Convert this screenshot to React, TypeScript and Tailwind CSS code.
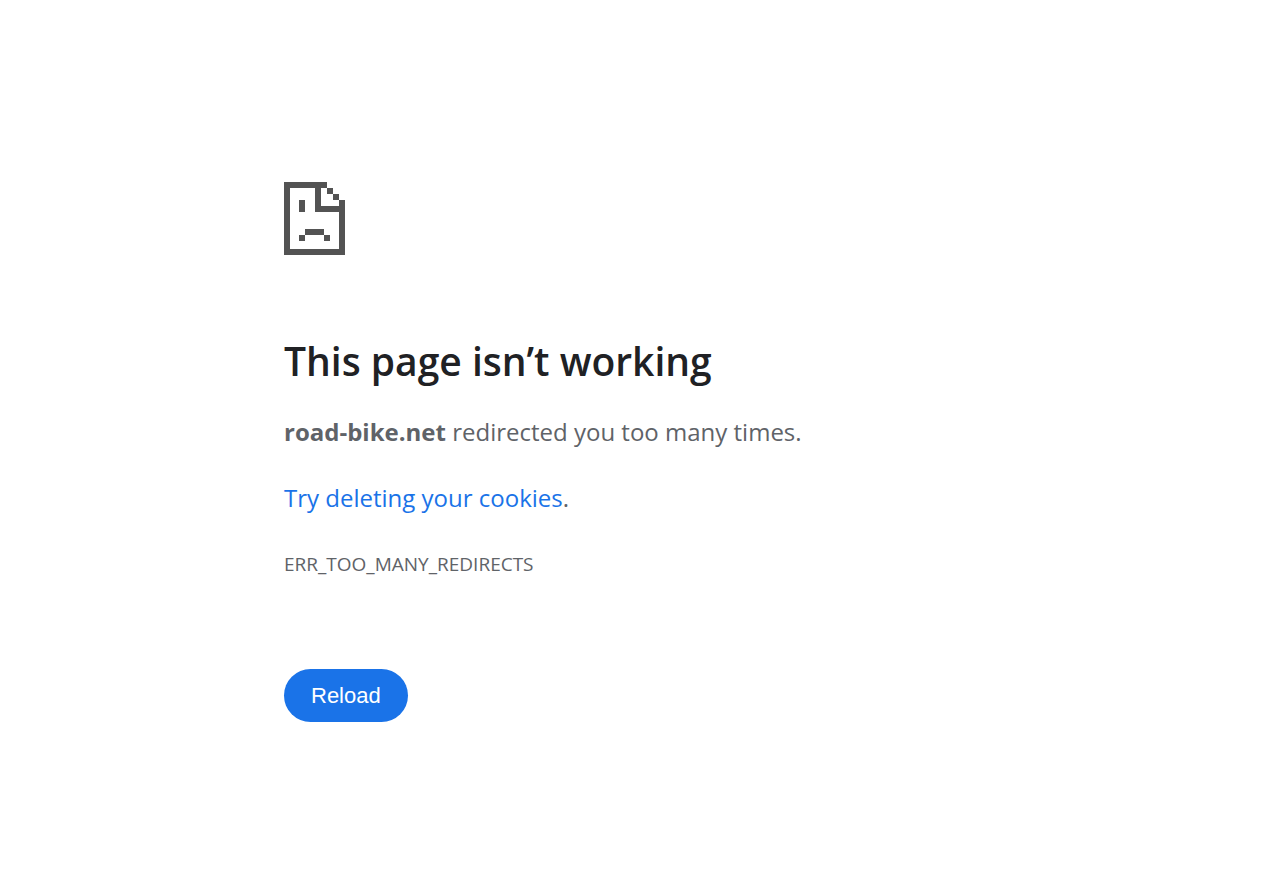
function SadPageIcon() {
  return (
    <svg
      className="h-[73px] w-[61px] text-[#535353]"
      viewBox="0 0 61 73"
      fill="currentColor"
      shapeRendering="crispEdges"
      aria-hidden="true"
    >
      <path
        d="M0 0h43v6h6v6h6v6h6v55H0zM6 6v61h49V30H31V6zM37 6v18h18v-6h-6v-6h-6V6z"
        fillRule="evenodd"
      />
      <path d="M15 18h6v12h-6zM21 47h19v6H21zM15 53h6v6h-6zM40 53h6v6h-6z" />
    </svg>
  );
}

export default function App() {
  return (
    <div className="min-h-screen bg-white px-6 pt-[182px] pb-16 font-['Open_Sans',sans-serif] text-[#5f6368]">
      <main className="mx-auto w-full max-w-[712px]">
        <SadPageIcon />
        <h1 className="mt-20 text-[39px] leading-[52px] font-semibold text-[#202124]">
          This page isn’t working
        </h1>
        <p className="mt-[26px] text-2xl leading-[38px]">
          <strong className="font-bold">road-bike.net</strong> redirected you
          too many times.
        </p>
        <p className="mt-7 text-2xl leading-[38px]">
          <a href="#cookies" className="text-[#1a73e8]">
            Try deleting your cookies
          </a>
          .
        </p>
        <p className="mt-7 text-[19px] leading-[38px]">
          ERR_TOO_MANY_REDIRECTS
        </p>
        <button
          type="button"
          className="mt-[86px] rounded-full bg-[#1a73e8] px-[27px] py-3 font-['Liberation_Sans',Arial,sans-serif] text-[22px] leading-[29px] text-white"
        >
          Reload
        </button>
      </main>
    </div>
  );
}
